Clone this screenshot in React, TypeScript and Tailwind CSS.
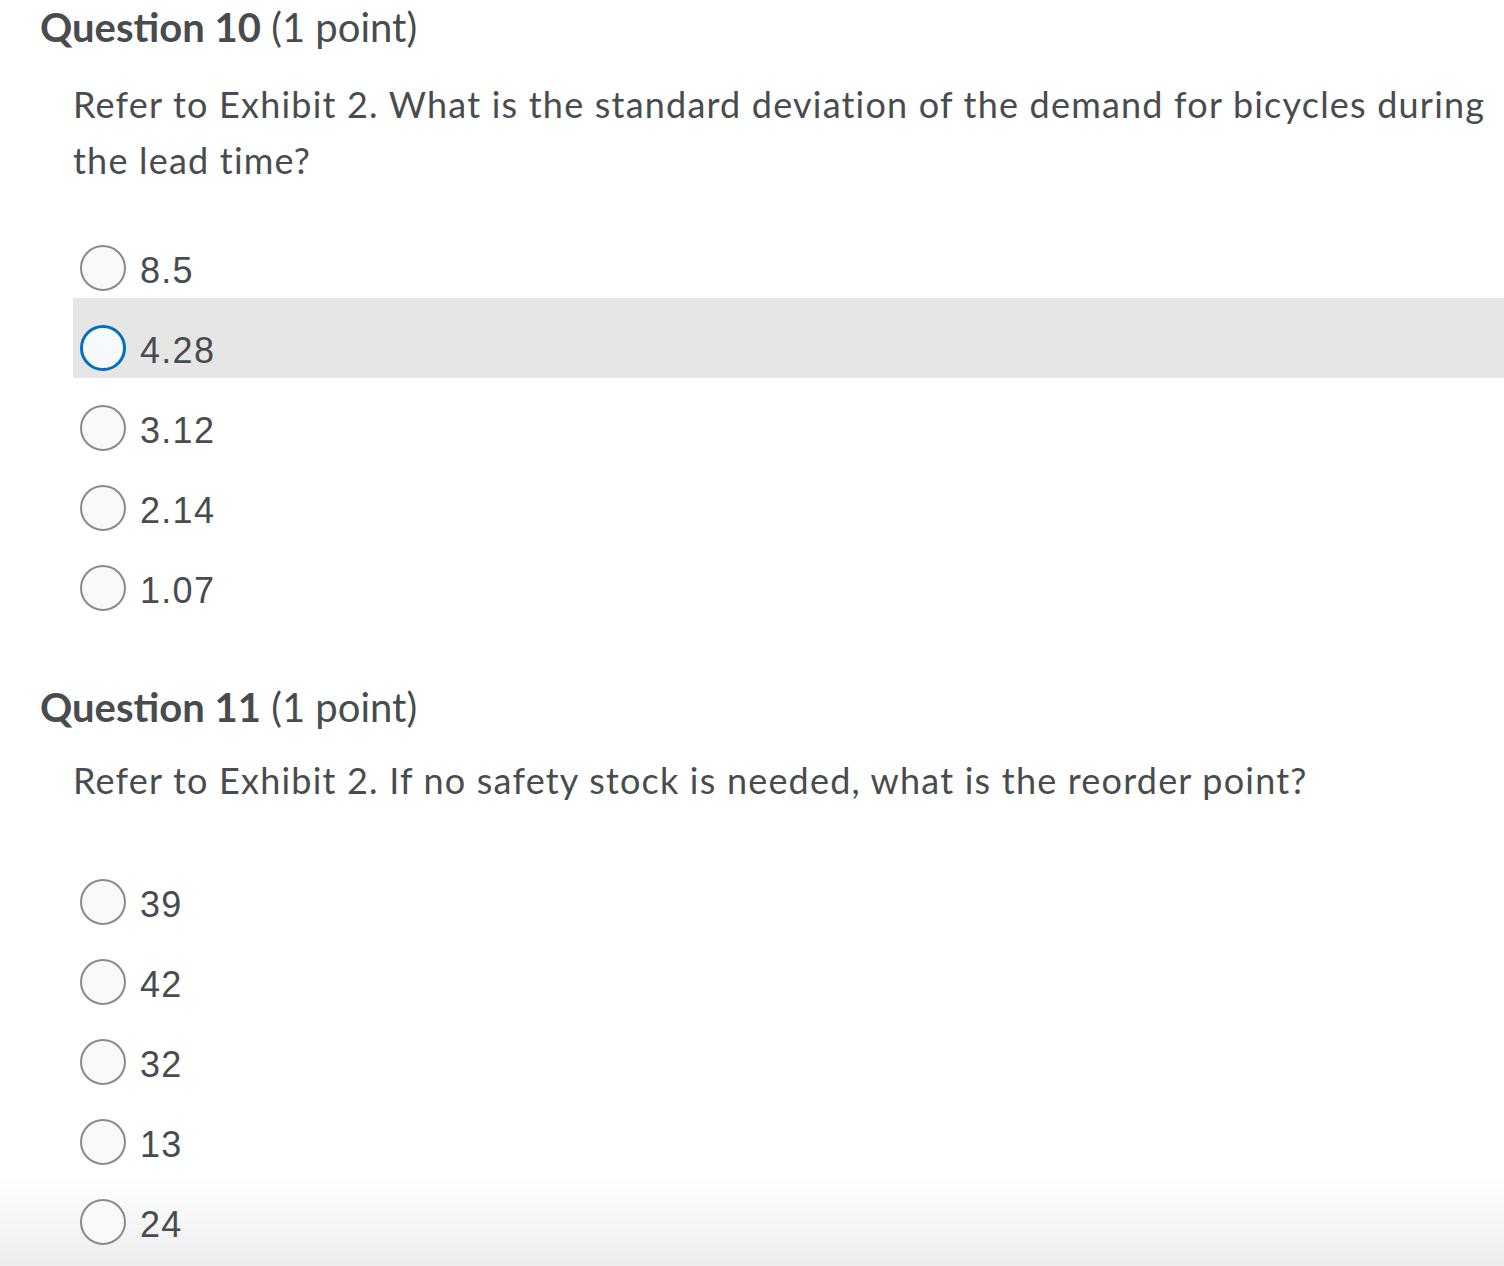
const questions = [
  {
    num: 10,
    text: 'Refer to Exhibit 2. What is the standard deviation of the demand for bicycles during the lead time?',
    options: ['8.5', '4.28', '3.12', '2.14', '1.07'],
    focused: 1,
  },
  {
    num: 11,
    text: 'Refer to Exhibit 2. If no safety stock is needed, what is the reorder point?',
    options: ['39', '42', '32', '13', '24'],
    focused: -1,
  },
];

function Radio({ focused }: { focused: boolean }) {
  return (
    <span
      className={
        focused
          ? 'block w-[46px] h-[46px] shrink-0 rounded-full border-[3px] border-[#006fbf] bg-[#f7f9fb]'
          : 'block w-[46px] h-[46px] shrink-0 rounded-full border-2 border-[#8a8a8a] bg-[#f7f9fb]'
      }
    />
  );
}

function Question({ q, first }: { q: (typeof questions)[number]; first: boolean }) {
  return (
    <section className={first ? '' : 'mt-[65px]'}>
      <h2 className="pl-[40px] text-[40px] leading-[48px] text-[#494c4e]">
        <span className="font-bold">Question {q.num}</span> <span className="font-normal">(1 point)</span>
      </h2>
      <p
        className={
          first
            ? 'mt-[25px] pl-[73px] text-[36px] leading-[56px] tracking-[1.2px] text-[#494c4e]'
            : 'mt-[21px] pl-[73px] text-[36px] leading-[56px] tracking-[1.2px] text-[#494c4e]'
        }
      >
        {q.text}
      </p>
      <div className={first ? 'mt-[30px] ml-[73px]' : 'mt-[44px] ml-[73px]'}>
        {q.options.map((opt, i) => (
          <label
            key={opt}
            className={
              i === q.focused
                ? 'flex items-center h-[80px] pt-[20px] pl-[7px] gap-[14px] bg-[#e6e6e6]'
                : 'flex items-center h-[80px] pt-[20px] pl-[7px] gap-[14px]'
            }
          >
            <Radio focused={i === q.focused} />
            <span className="mt-[6px] text-[36px] tracking-[1.3px] text-[#494c4e] font-['Liberation_Sans',Arial,sans-serif]">
              {opt}
            </span>
          </label>
        ))}
      </div>
    </section>
  );
}

export default function App() {
  return (
    <div className="relative w-[1504px] h-[1266px] overflow-hidden bg-white font-['Lato',sans-serif]">
      <div className="absolute bottom-0 left-0 right-0 h-[90px] bg-gradient-to-b from-white to-[#ededed]" />
      <div className="relative pt-[3px]">
        {questions.map((q, i) => (
          <Question key={q.num} q={q} first={i === 0} />
        ))}
      </div>
    </div>
  );
}
